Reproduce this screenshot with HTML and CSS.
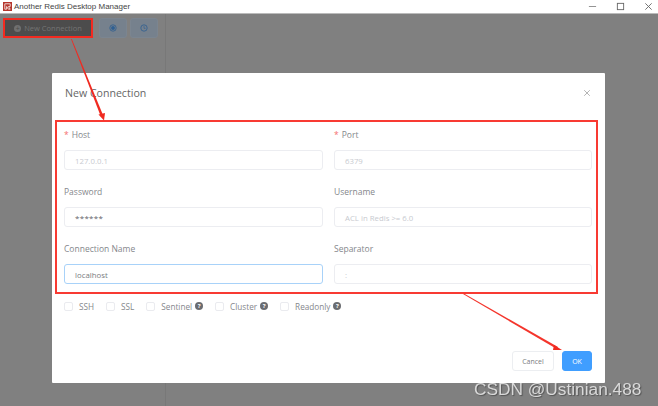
FILE: index.html
```html
<!DOCTYPE html>
<html lang="en">
<head>
<meta charset="utf-8">
<title>Another Redis Desktop Manager</title>
<link rel="stylesheet" href="styles.css">
</head>
<body>
<div class="app">
  <header class="titlebar">
    <div class="brand">
      <svg class="logo" viewBox="0 0 10 10"><rect width="10" height="10" fill="#b5352c"/><path d="M2 2h6v3H6l2 3H6L4 5v3H2z" fill="none" stroke="#f3e3e0" stroke-width="1"/></svg>
      <span>Another Redis Desktop Manager</span>
    </div>
    <div class="winctl">
      <svg viewBox="0 0 10 10"><path d="M1 5h8" stroke="#888" fill="none"/></svg>
      <svg viewBox="0 0 10 10"><rect x="1.5" y="1.5" width="7" height="7" stroke="#666" fill="none"/></svg>
      <svg viewBox="0 0 10 10"><path d="M1.5 1.5l7 7M8.5 1.5l-7 7" stroke="#666" fill="none"/></svg>
    </div>
  </header>
  <div class="workspace">
    <aside class="sidebar">
      <div class="toolbar">
        <button class="btn-new"><span class="plus">+</span>New Connection</button>
        <button class="btn-tool"><svg viewBox="0 0 10 10"><circle cx="5" cy="5" r="4" fill="none" stroke="#2f5f92"/><circle cx="5" cy="5" r="2.4" fill="#2f5f92"/></svg></button>
        <button class="btn-tool"><svg viewBox="0 0 10 10"><circle cx="5" cy="5" r="4" fill="none" stroke="#2f5f92"/><path d="M5 2.6V5.4H7" fill="none" stroke="#2f5f92" stroke-width=".8"/></svg></button>
      </div>
    </aside>
  </div>
  <section class="dialog">
    <div class="dialog-head">
      <h2>New Connection</h2>
      <svg class="close" viewBox="0 0 10 10"><path d="M1.5 1.5l7 7M8.5 1.5l-7 7" stroke="#aaa" fill="none" stroke-width="1.1"/></svg>
    </div>
    <form class="form">
      <div class="field"><label><i>*</i>Host</label><div class="input ph">127.0.0.1</div></div>
      <div class="field"><label><i>*</i>Port</label><div class="input ph">6379</div></div>
      <div class="field"><label>Password</label><div class="input pw">******</div></div>
      <div class="field"><label>Username</label><div class="input ph">ACL in Redis &gt;= 6.0</div></div>
      <div class="field"><label>Connection Name</label><div class="input focus">localhost</div></div>
      <div class="field"><label>Separator</label><div class="input ph">:</div></div>
    </form>
    <div class="checks">
      <span class="check"><b></b>SSH</span>
      <span class="check"><b></b>SSL</span>
      <span class="check"><b></b>Sentinel<em>?</em></span>
      <span class="check"><b></b>Cluster<em>?</em></span>
      <span class="check"><b></b>Readonly<em>?</em></span>
    </div>
    <div class="actions">
      <button class="btn-cancel">Cancel</button>
      <button class="btn-ok">OK</button>
    </div>
  </section>
  <svg class="annot" viewBox="0 0 658 406" width="658" height="406">
    <rect x="4" y="19" width="88" height="18" fill="none" stroke="#f32a20" stroke-width="2"/>
    <rect x="56" y="121" width="541" height="172" fill="none" stroke="#f83a32" stroke-width="2"/>
    <path d="M71 39L71.8 39L103.4 116L101 117z" fill="#f02a20"/>
    <path d="M98.5 114.5L105 113L104 120.5z" fill="#f02a20"/>
    <path d="M463 294L464 293.5L558 347L556.8 349z" fill="#f4352c"/>
    <path d="M554 345L562 350L553 350z" fill="#f02a20"/>
  </svg>
  <div class="watermark">CSDN @Ustinian.488</div>
</div>
</body>
</html>
```

FILE: styles.css
```css
* { box-sizing: border-box; }
html, body { margin: 0; height: 100%; overflow: hidden; }
body { font-family: "Open Sans", "Liberation Sans", sans-serif; background: #808080; }
.app { position: relative; width: 658px; height: 406px; overflow: hidden; display: flex; flex-direction: column; filter: blur(0.45px); }
.titlebar { height: 14px; background: #fff; border-bottom: 1px solid #bbb; display: flex; justify-content: space-between; align-items: center; padding: 0 5px 1px 3px; flex: none; }
.brand { display: flex; align-items: center; gap: 2px; font-size: 8px; color: #444; font-family: "Liberation Sans", sans-serif; white-space: nowrap; }
.logo { width: 9px; height: 9px; }
.winctl { display: flex; gap: 19px; }
.winctl svg { width: 9px; height: 9px; display: block; }
.workspace { flex: 1; display: flex; }
.sidebar { width: 166px; border-right: 1px solid #787878; padding: 4px 0 0 4px; }
.toolbar { display: flex; gap: 3px; align-items: center; }
.btn-new { width: 88px; height: 20px; margin-right: 4px; border: 0; border-radius: 2px; background: #4c4c4c; color: #747474; font: 7.5px "Open Sans", sans-serif; padding: 0; display: flex; align-items: center; justify-content: center; gap: 3px; }
.plus { width: 7px; height: 7px; border-radius: 50%; background: #707070; color: #4c4c4c; font-size: 7px; line-height: 7px; text-align: center; }
.btn-tool { width: 28px; height: 20px; border: 1px solid #7b8590; border-radius: 3px; background: #76818d; padding: 0; display: flex; align-items: center; justify-content: center; }
.btn-tool svg { width: 8px; height: 8px; }
.dialog { position: absolute; left: 52px; top: 73px; width: 553px; height: 310px; background: #fff; border-radius: 1px; padding: 12px 13px 12px 12px; display: flex; flex-direction: column; }
.dialog-head { display: flex; justify-content: space-between; align-items: center; height: 16px; padding: 0 1px; }
.dialog-head h2 { margin: 0; font-size: 10.6px; font-weight: 400; color: #666; }
.close { width: 8px; height: 8px; margin-right: 0; }
.form { display: grid; grid-template-columns: 259px 258px; column-gap: 11px; row-gap: 10px; margin-top: 22px; }
.field { display: flex; flex-direction: column; }
label { height: 27px; font-size: 8.5px; line-height: 12px; padding-top: 6px; color: #85878c; }
label i { color: #f56c6c; font-style: normal; margin-right: 3px; }
.input { height: 20px; border: 1px solid #ecedf1; border-radius: 3px; padding: 1px 10px 0; font-size: 7.8px; line-height: 18px; color: #7a7c80; }
.ph { color: #c8cad0; }
.pw { color: #606266; font-size: 8px; letter-spacing: .3px; }
.focus { border-color: #a8d2f9; }
.checks { display: flex; align-items: center; gap: 12px; margin-top: 17px; font-size: 8.2px; color: #85878c; height: 10px; }
.check { display: flex; align-items: center; }
.check b { width: 9px; height: 9px; border: 1px solid #eaebef; border-radius: 2px; margin-right: 6px; }
.check em { width: 8px; height: 8px; border-radius: 50%; background: #6a6c70; color: #fff; font-style: normal; font-size: 6px; font-weight: 700; line-height: 8px; text-align: center; margin-left: 3px; }
.actions { margin-top: auto; display: flex; justify-content: flex-end; gap: 8px; }
.actions button { height: 20px; border-radius: 3px; font: 7px "Open Sans", sans-serif; padding: 0; }
.btn-cancel { width: 42px; background: #fff; border: 1px solid #eceef1; color: #7a7c80; }
.btn-ok { width: 30px; background: #409eff; border: 1px solid #409eff; color: #fff; }
.annot { position: absolute; left: 0; top: 0; }
.watermark { position: absolute; left: 474px; top: 379px; font: 17.3px/20px "Liberation Sans", sans-serif; color: #d9d9d9; text-shadow: 1px 1px 1px #555; white-space: nowrap; }
```
